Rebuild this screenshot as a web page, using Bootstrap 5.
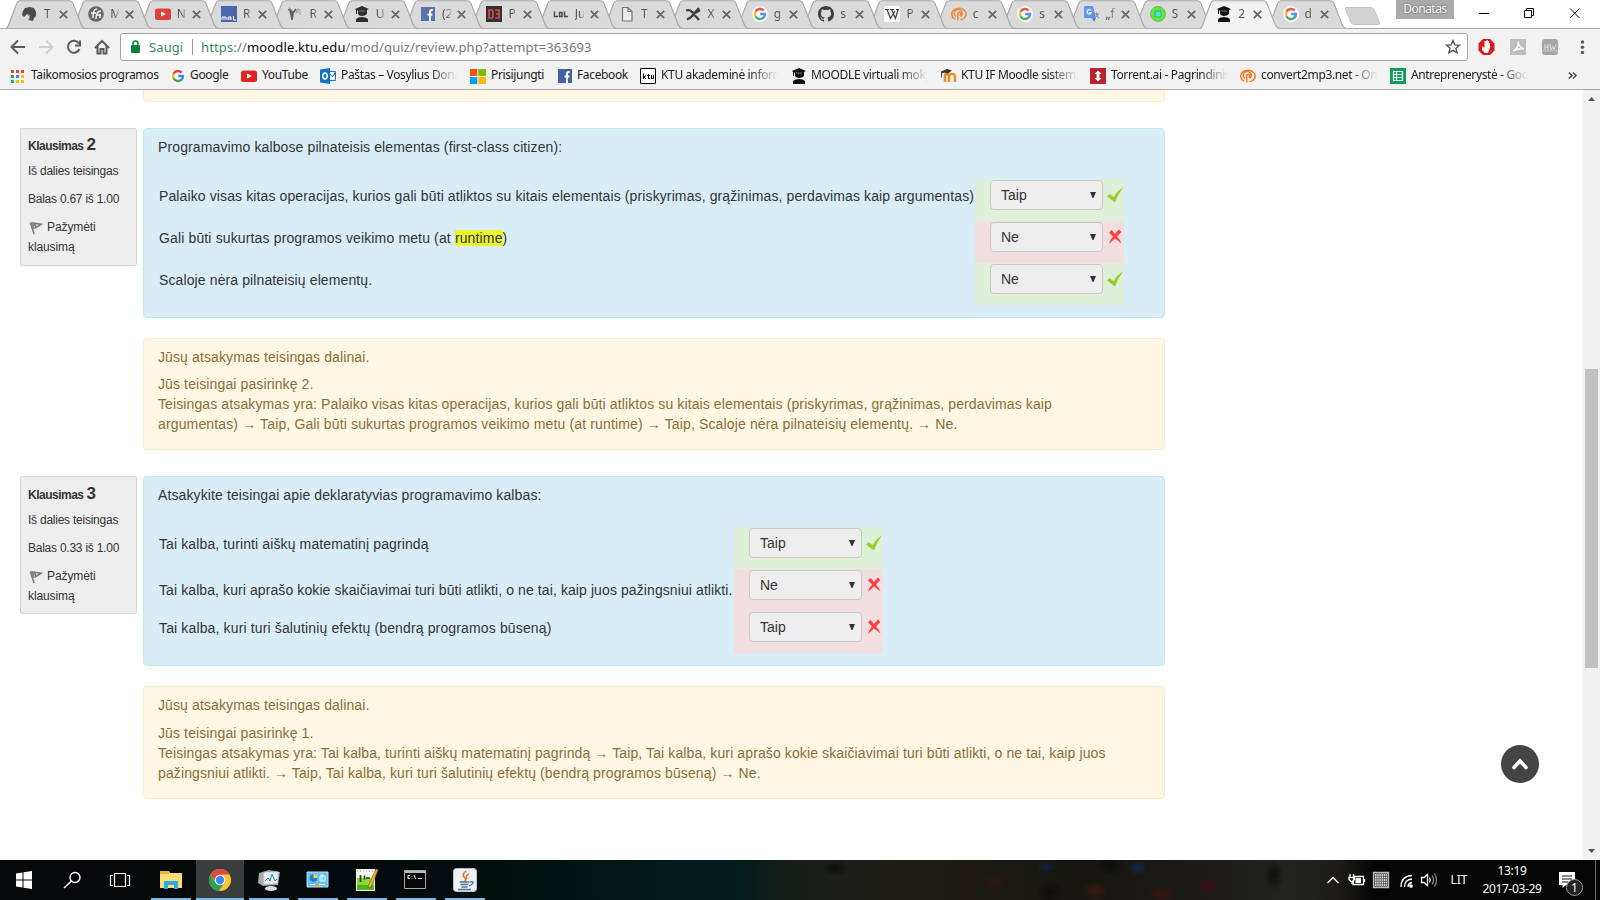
<!DOCTYPE html>
<html lang="lt">
<head>
<meta charset="utf-8">
<title>Testo peržiūra</title>
<link href="https://cdn.jsdelivr.net/npm/bootstrap@5.3.0/dist/css/bootstrap.min.css" rel="stylesheet">
<style>
html,body{height:900px;overflow:hidden}
body{font-family:"Liberation Sans",Arial,sans-serif;font-size:14px;line-height:20px;color:#333;background:#fff}
svg{display:block;flex:none}
.ui{font-family:"Noto Sans","Open Sans",sans-serif;font-size:12px;color:#222;white-space:nowrap}
/* tab strip */
.strip{height:29px;padding-left:6px;border-bottom:1px solid #a9a9a9;background:#fff;z-index:1}
.tb{flex:0 0 66.35px;height:28px;padding-left:16px}
.tb>.shape{position:absolute;left:0;top:0;width:80px;height:29px}
.tb>.fav,.tb>.ttl,.tb>.cls{position:relative}
.tb>.fav{width:16px;height:16px;opacity:.85}
.tb>.ttl{width:9px;margin:0 6px 0 6px;overflow:hidden;color:#555;-webkit-mask-image:linear-gradient(90deg,#000 50%,rgba(0,0,0,.25))}
.tb>.cls{width:9px;height:9px}
.tb.on>.fav{opacity:1}
.newtab{width:35px;height:18px;margin:7px 0 0 12px}
.person{flex:none;width:58px;height:19px;margin-left:16px;background:#aaa;color:#fff;line-height:17px;letter-spacing:-.5px;text-shadow:0 0 2px #444}
.bar{height:34px;background:#f2f2f2;padding-top:4px}
.omni{width:1348px;height:28px;border:1px solid #a5a5a5;border-radius:3px;background:#fff;font-size:13px}
.marks{height:27px;background:#f2f2f2;border-bottom:1px solid #a9a9a9;padding-left:10px;letter-spacing:-.36px}
.bm{height:25px;gap:4px;flex:none;overflow:hidden}
.bm>span{margin-top:-1px}
.bm.fade-r>span{overflow:hidden;-webkit-mask-image:linear-gradient(90deg,#000 calc(100% - 28px),transparent)}
/* page */
.view{height:770px}
.page{width:1583px;padding-left:20px}
.scroller{width:17px;background:#f1f1f1}
.thumb{width:13px;height:299px;background:#c1c1c1;margin-top:262px}
.info{width:117px;height:138px;border:1px solid #d5d5d5;border-radius:2px;background:#eee;padding:6px 7px;font-size:12px;letter-spacing:-.24px;margin-right:6px;flex:none;color:#333}
.info.low{padding-top:7px}
.info b{letter-spacing:-.5px}
.info b span{font-size:17px}
.info .mk{letter-spacing:-.1px}
.qbox{width:1022px;height:190px;border:1px solid #bce8f1;border-radius:4px;background:#d9edf7;padding:8px 14px;letter-spacing:.115px}
.fb{width:1022px;margin-left:123px;border:1px solid #faebcc;border-radius:4px;background:#fef7e3;color:#8a6d3b;padding:8px 14px;white-space:nowrap;letter-spacing:.112px}
.arow{height:42px}
.wide{letter-spacing:.14px}
.slim{letter-spacing:.093px}
.cell{width:149px;padding:1px 0 0 15px;letter-spacing:0}
.good{background:#dff0d8}.bad{background:#f2dede}
.sel{width:113px;height:30px;border:1px solid #c8c8c8;border-radius:4px;background:#eee;padding:0 6px 0 10px}
.qtext{padding-top:7px;white-space:nowrap}
.hl{background:#e9f52f;padding:0}
.totop{position:absolute;left:1501px;top:655px;width:38px;height:38px;background:#444}
/* taskbar */
.task{height:40px;color:#fff;background:radial-gradient(ellipse 10px 7px at 1046px 7px,#0d2340,transparent),radial-gradient(ellipse 10px 7px at 1137px 8px,#102850,transparent),radial-gradient(ellipse 12px 9px at 1208px 26px,#400c14,transparent),radial-gradient(ellipse 14px 10px at 1095px 31px,#3b1a15,transparent),radial-gradient(ellipse 12px 9px at 995px 22px,#301519,transparent),radial-gradient(ellipse 14px 9px at 1162px 34px,#3a1511,transparent),radial-gradient(ellipse 16px 10px at 1110px 6px,#0d0d0d,transparent),radial-gradient(ellipse 14px 12px at 1050px 32px,#0d0d0d,transparent),radial-gradient(ellipse 14px 8px at 835px 8px,#0d0d0c,transparent),radial-gradient(ellipse 10px 16px at 1274px 15px,#0f0e0d,transparent),linear-gradient(90deg,#070809 0,#040b0c 400px,#04110f 520px,#03191a 660px,#031b1a 740px,#131c18 780px,#1d1f18 830px,#1d1b14 960px,#17150f 1080px,#1c1b17 1200px,#24241f 1290px,#1c1b18 1340px,#050506 1375px,#050506 100%)}
.tk{height:40px;flex:none;border-bottom:2px solid transparent}
.tk.run{border-color:#76b9ed}
.tk.act{background:#3a3d3e}
</style>
</head>
<body>
<svg width="0" height="0" class="position-absolute">
<defs>
<symbol id="tab" viewBox="0 0 80 29"><path d="M0 28C2 27 2.500 25 3.500 22.500L10.500 4Q11.500 1 13.500 .7H64Q66 1 67 3.500L75 24Q76.500 28 79.500 28.500Z" fill="#dadada"/><path d="M0 28.500C2 28 2.500 25 3.500 22.500L10.500 4Q11.500 1 13.500 .7H64Q66 1 67 3.500L75 24Q76.500 28 79.500 28.500" fill="none" stroke="#a6a6a6" stroke-width="1.100"/></symbol>
<symbol id="tabon" viewBox="0 0 80 29"><path d="M0 29C2 28 2.500 25 3.500 22.500L10.500 4Q11.500 1 13.500 .7H64Q66 1 67 3.500L75 24Q76.500 28 79.500 29Z" fill="#f2f2f2"/><path d="M0 28.500C2 28 2.500 25 3.500 22.500L10.500 4Q11.500 1 13.500 .7H64Q66 1 67 3.500L75 24Q76.500 28 79.500 28.500" fill="none" stroke="#a6a6a6" stroke-width="1.100"/></symbol>
<symbol id="x" viewBox="0 0 9 9"><path d="M.8.8l7.400 7.400M8.200.8L.8 8.200" stroke="#666" stroke-width="1.700"/></symbol>
<symbol id="horse" viewBox="0 0 16 16"><path d="M1 5L3 2l5-1 4 1 2 4v4l-2 2-1 3-5-1 2-3-3-3-3 3-2-2z" fill="#333"/><path d="M7 14l1-4-2-2" stroke="#888" fill="none"/></symbol>
<symbol id="mono" viewBox="0 0 16 16"><circle cx="8" cy="8" r="7.800" fill="#555"/><path d="M3 7h5M5 12c0-8 2-9 4-9M8 13c0-7 3-8 5-8M8 9h5M12 8v4" stroke="#fff" stroke-width="1.400" fill="none"/></symbol>
<symbol id="yt" viewBox="0 0 16 16"><rect y="2.500" width="16" height="11.500" rx="2.500" fill="#e02424"/><path d="M6 5.500v5l5-2.500z" fill="#fff"/></symbol>
<symbol id="mal" viewBox="0 0 16 16"><path fill="#2e51a2" d="M0 0h16v16H0z"/><path d="M1 14v-3h4v3M3 11v3M7 14v-3h3v3M7 13h3M12.500 10v4H15" stroke="#fff" fill="none"/></symbol>
<symbol id="wolf" viewBox="0 0 16 16"><path d="M1.500 3l4.500 4 3-4M6 7l-1 7M3 4l2 9" stroke="#444" stroke-width="1.700" fill="none"/><path d="M2 1l4 4M10 3l-1 5M11 2v5M13 3v6" stroke="#999"/></symbol>
<symbol id="grad" viewBox="0 0 16 16"><path d="M1 3l7-3 7 3-2 1v4q-2 2-5 2T4 8V4.500H3V8H2V4z" fill="#111"/><path d="M2 16v-3q2-2 6-2t6 2v3z" fill="#111"/><path d="M5 5h6" stroke="#777"/></symbol>
<symbol id="fb" viewBox="0 0 16 16"><path fill="#4460a0" d="M1 1h14v14H1z"/><path d="M12.800 4h-1q-1.800 0-1.800 2V15M7.500 8.500h5" stroke="#fff" stroke-width="2" fill="none"/></symbol>
<symbol id="d3" viewBox="0 0 16 16"><path fill="#151515" d="M0 0h16v16H0z"/><path d="M3 4h3l1 1v6l-1 1H3zM9 4h4v8H9M10 8h3" stroke="#e03030" stroke-width="1.700" fill="none"/></symbol>
<symbol id="lol" viewBox="0 0 16 16"><path d="M1.500 5.500v5H5M6.500 6.500h2.500v4H6.500zM11.500 5.500v5H15" stroke="#333" stroke-width="1.500" fill="none"/></symbol>
<symbol id="doc" viewBox="0 0 16 16"><path d="M3.500 1.500h5.500l4 4v9.500H3.500zM9 1.500v4h4" stroke="#666" fill="#eee" stroke-width="1.200"/></symbol>
<symbol id="xs" viewBox="0 0 16 16"><path d="M1 4.500q4-1 6 1.500t8-2M2 13.500q3-1 5.500-4T14 2M9 9q2 1 5 5" stroke="#222" stroke-width="2.300" fill="none"/></symbol>
<symbol id="goog" viewBox="0 0 16 16"><circle cx="8" cy="8" r="8" fill="#fff"/><g fill="none" stroke-width="2.400"><path d="M11.700 4.600A5 5 0 0 0 3.500 5.800" stroke="#ea4335"/><path d="M3.500 5.700a5 5 0 0 0 0 4.600" stroke="#fbbc05"/><path d="M3.500 10.200a5 5 0 0 0 8 1.400" stroke="#34a853"/><path d="M11.300 11.800A5 5 0 0 0 13 8H8.200" stroke="#4285f4"/></g></symbol>
<symbol id="git" viewBox="0 0 16 16"><path d="M8 0C3.580 0 0 3.580 0 8c0 3.540 2.290 6.530 5.470 7.590.4.070.55-.17.55-.38v-1.490c-2.230.48-2.700-1.070-2.700-1.070-.36-.92-.89-1.170-.89-1.170-.73-.5.050-.48.050-.48.800.050 1.230.82 1.230.82.710 1.210 1.870.870 2.330.660.070-.52.280-.870.500-1.070-1.780-.2-3.640-.89-3.640-3.950 0-.87.310-1.590.82-2.150-.08-.2-.36-1.020.08-2.120 0 0 .67-.21 2.200.82a7.600 7.600 0 0 1 4 0c1.530-1.040 2.200-.82 2.200-.82.440 1.100.160 1.920.080 2.120.510.560.820 1.270.820 2.150 0 3.070-1.870 3.750-3.650 3.950.290.250.540.730.540 1.480v2.200c0 .210.150.460.550.380A8 8 0 0 0 16 8c0-4.420-3.580-8-8-8z" fill="#222"/></symbol>
<symbol id="wiki" viewBox="0 0 16 16"><rect width="16" height="16" rx="2" fill="#fff"/><path d="M1 3.500h4M6 3.500h4M12 3.500h3M3 3.500l3.500 9L11 5M7.500 3.500l4 9 2.500-9" stroke="#222" fill="none" stroke-width="1.200"/></symbol>
<symbol id="conv" viewBox="0 0 16 16"><path d="M4 13A7.200 5.900 0 1 1 9.500 13.800M5 10.500A4 3.800 0 1 1 9.500 10.500M6.800 14.500V7.500q0-1.300 1.500-1.300t1.500 1.300-1.500 1.500" stroke="#f07a22" stroke-width="1.500" fill="none"/></symbol>
<symbol id="trans" viewBox="0 0 16 16"><path fill="#ddd" d="M7 4h9v11H9z"/><path fill="#4a8af4" d="M1 0h8l3 12H1q-1 0-1-1V1z"/><path fill="#3367d6" d="M8 12h4l-2 4z"/><path d="M7 4.500a2.200 2.200 0 1 0 .3 2H5" stroke="#fff" fill="none" stroke-width="1.200"/><path d="M10 8h5M12.500 6.500V8q1 3 2.500 4M14 8q-1 3-3 4" stroke="#777" fill="none"/></symbol>
<symbol id="green" viewBox="0 0 16 16"><circle cx="8" cy="8" r="7.500" fill="#38f50c" stroke="#777" stroke-width=".7"/><path fill="#38d8e8" stroke="#1a9a50" stroke-width=".7" d="M5 5h6v6H5z"/></symbol>
<symbol id="mood" viewBox="0 0 16 16"><path d="M4 14V7.500q0-1.500 1.500-1.500T8 8v6M8 8q0-2 3-2t3 2.500V14" stroke="#f0901e" stroke-width="2.500" fill="none"/><path d="M0 3.500l6-2.500 5 1.500-4 3-4-1-2 1v4H.2z" fill="#333"/></symbol>
<symbol id="tor" viewBox="0 0 16 16"><path fill="#b8242a" d="M0 0h16v16H0z"/><path fill="#fff" d="M8 2.500l3.500 3.500H9.500v4h2L8 13.500 4.500 10h2V6h-2z"/></symbol>
<symbol id="sheet" viewBox="0 0 16 16"><path fill="#0f9d58" d="M0 0h16v16H0z"/><path d="M3.500 3.500h9v9h-9zM3.500 6.500h9M3.500 9.500h9M6.500 3.500v9" stroke="#fff" stroke-width="1.200" fill="none"/></symbol>
<symbol id="apps" viewBox="0 0 14 14"><path fill="#ea4335" d="M1 1h3v3H1zM6 1h3v3H6zM11 1h3v3h-3z"/><path fill="#34a853" d="M1 6h3v3H1zM1 11h3v3H1z"/><path fill="#4285f4" d="M6 6h3v3H6z"/><path fill="#fbbc05" d="M11 6h3v3h-3zM11 11h3v3h-3zM6 11h3v3H6z"/></symbol>
<symbol id="outl" viewBox="0 0 16 16"><path d="M9 3.500h6.500v9H9zM9 5l3.500 4L15.500 4" stroke="#1072c6" fill="#fff"/><path fill="#1072c6" d="M0 1.500L10 0v16L0 14.500z"/><ellipse cx="5" cy="8" rx="2.200" ry="2.900" stroke="#fff" stroke-width="1.600" fill="none"/></symbol>
<symbol id="ms" viewBox="0 0 16 16"><path fill="#f65314" d="M0 1h7.300v7H0z"/><path fill="#7cbb00" d="M8.300 1H16v7H8.300z"/><path fill="#00a1f1" d="M0 9h7.300v7H0z"/><path fill="#ffbb00" d="M8.300 9H16v7H8.300z"/></symbol>
<symbol id="ktu" viewBox="0 0 16 16"><path d="M.5.500h15v15H.5z" fill="#fff" stroke="#000"/><path d="M3.500 5.500v5.500M6 7.500L4 9l2 2M8.500 6v4.500H10M7 7.500h3M11.500 7v3.500h2V7" stroke="#000" fill="none"/></symbol>
<symbol id="ok" viewBox="0 0 16 16"><path d="M0 9.500L2.500 7l4 3Q10 4 16 .5Q11 7 8 15.500Z" fill="#9acd32"/></symbol>
<symbol id="no" viewBox="0 0 16 16"><path d="M2 3.500L4.500 1 8 5 12 .5 14.300 3 10 7.500Q13 10.500 14.500 14.500L8 9.500 1.800 15Q3 11 6 7.500Z" fill="#ff403c"/></symbol>
<symbol id="flag" viewBox="0 0 16 16"><path d="M2.500 3l4 12M3 3l11 1.500-7 4.500M6.500 4l2.500 4" stroke="#777" stroke-width="1.600" fill="none"/><path d="M2 3h4l1 6-2 1z" fill="#888"/></symbol>
</defs>
</svg>

<header class="ui position-relative">
<div class="strip d-flex position-relative">
<div class="tb d-flex align-items-center position-relative" style="z-index:20"><svg class="shape"><use href="#tab"/></svg><svg class="fav"><use href="#horse"/></svg><span class="ttl">T</span><svg class="cls"><use href="#x"/></svg></div>
<div class="tb d-flex align-items-center position-relative" style="z-index:19"><svg class="shape"><use href="#tab"/></svg><svg class="fav"><use href="#mono"/></svg><span class="ttl">M</span><svg class="cls"><use href="#x"/></svg></div>
<div class="tb d-flex align-items-center position-relative" style="z-index:18"><svg class="shape"><use href="#tab"/></svg><svg class="fav"><use href="#yt"/></svg><span class="ttl">N</span><svg class="cls"><use href="#x"/></svg></div>
<div class="tb d-flex align-items-center position-relative" style="z-index:17"><svg class="shape"><use href="#tab"/></svg><svg class="fav"><use href="#mal"/></svg><span class="ttl">R</span><svg class="cls"><use href="#x"/></svg></div>
<div class="tb d-flex align-items-center position-relative" style="z-index:16"><svg class="shape"><use href="#tab"/></svg><svg class="fav"><use href="#wolf"/></svg><span class="ttl">R</span><svg class="cls"><use href="#x"/></svg></div>
<div class="tb d-flex align-items-center position-relative" style="z-index:15"><svg class="shape"><use href="#tab"/></svg><svg class="fav"><use href="#grad"/></svg><span class="ttl">U</span><svg class="cls"><use href="#x"/></svg></div>
<div class="tb d-flex align-items-center position-relative" style="z-index:14"><svg class="shape"><use href="#tab"/></svg><svg class="fav"><use href="#fb"/></svg><span class="ttl">(2</span><svg class="cls"><use href="#x"/></svg></div>
<div class="tb d-flex align-items-center position-relative" style="z-index:13"><svg class="shape"><use href="#tab"/></svg><svg class="fav"><use href="#d3"/></svg><span class="ttl">P</span><svg class="cls"><use href="#x"/></svg></div>
<div class="tb d-flex align-items-center position-relative" style="z-index:12"><svg class="shape"><use href="#tab"/></svg><svg class="fav"><use href="#lol"/></svg><span class="ttl">Ju</span><svg class="cls"><use href="#x"/></svg></div>
<div class="tb d-flex align-items-center position-relative" style="z-index:11"><svg class="shape"><use href="#tab"/></svg><svg class="fav"><use href="#doc"/></svg><span class="ttl">T</span><svg class="cls"><use href="#x"/></svg></div>
<div class="tb d-flex align-items-center position-relative" style="z-index:10"><svg class="shape"><use href="#tab"/></svg><svg class="fav"><use href="#xs"/></svg><span class="ttl">X</span><svg class="cls"><use href="#x"/></svg></div>
<div class="tb d-flex align-items-center position-relative" style="z-index:9"><svg class="shape"><use href="#tab"/></svg><svg class="fav"><use href="#goog"/></svg><span class="ttl">g</span><svg class="cls"><use href="#x"/></svg></div>
<div class="tb d-flex align-items-center position-relative" style="z-index:8"><svg class="shape"><use href="#tab"/></svg><svg class="fav"><use href="#git"/></svg><span class="ttl">s</span><svg class="cls"><use href="#x"/></svg></div>
<div class="tb d-flex align-items-center position-relative" style="z-index:7"><svg class="shape"><use href="#tab"/></svg><svg class="fav"><use href="#wiki"/></svg><span class="ttl">P</span><svg class="cls"><use href="#x"/></svg></div>
<div class="tb d-flex align-items-center position-relative" style="z-index:6"><svg class="shape"><use href="#tab"/></svg><svg class="fav"><use href="#conv"/></svg><span class="ttl">c</span><svg class="cls"><use href="#x"/></svg></div>
<div class="tb d-flex align-items-center position-relative" style="z-index:5"><svg class="shape"><use href="#tab"/></svg><svg class="fav"><use href="#goog"/></svg><span class="ttl">s</span><svg class="cls"><use href="#x"/></svg></div>
<div class="tb d-flex align-items-center position-relative" style="z-index:4"><svg class="shape"><use href="#tab"/></svg><svg class="fav"><use href="#trans"/></svg><span class="ttl">„f</span><svg class="cls"><use href="#x"/></svg></div>
<div class="tb d-flex align-items-center position-relative" style="z-index:3"><svg class="shape"><use href="#tab"/></svg><svg class="fav"><use href="#green"/></svg><span class="ttl">S</span><svg class="cls"><use href="#x"/></svg></div>
<div class="tb on d-flex align-items-center position-relative" style="z-index:21"><svg class="shape"><use href="#tabon"/></svg><svg class="fav"><use href="#grad"/></svg><span class="ttl">2</span><svg class="cls"><use href="#x"/></svg></div>
<div class="tb d-flex align-items-center position-relative" style="z-index:1"><svg class="shape"><use href="#tab"/></svg><svg class="fav"><use href="#goog"/></svg><span class="ttl">d</span><svg class="cls"><use href="#x"/></svg></div>
<svg class="newtab" viewBox="0 0 35 18"><path d="M1 .5h25q2 0 3 2l5.500 13q.5 2-1.500 2H9q-2 0-3-2L.5 2.500Q0 .5 1 .5z" fill="#d2d2d2" stroke="#c2c2c2"/></svg>
<div class="person text-center">Donatas</div>
<svg width="146" height="28" viewBox="1454 0 146 28" fill="none" stroke="#000"><path d="M1479 13.500h10M1524.500 10.500h7v7h-7zM1526.500 10V8.500h7v7H1532M1570 8.500l9.500 9.500M1579.500 8.500L1570 18"/></svg>
</div>
<div class="bar d-flex">
<svg width="120" height="28" viewBox="0 0 120 28" fill="none" stroke="#5a5a5a" stroke-width="2"><path d="M25 14H12M18 7.500L11.500 14l6.500 6.500"/><path d="M39 14h13M46 7.500l6.500 6.500-6.500 6.500" stroke="#cfcfcf"/><path d="M79 10.500A6 6 0 1 0 79.500 16M80 7.500v5h-5"/><path d="M95 15l7-7 7 7M97.500 13v7.500h3V16h3v4.500h3V13"/></svg>
<div class="omni d-flex align-items-center">
<svg class="ms-2 me-1" width="14" height="16" viewBox="0 0 14 16"><rect x="2" y="6" width="9" height="8" rx="1" fill="#0b8043"/><path d="M4 7V4.500a2.500 2.500 0 0 1 5 0V7" fill="none" stroke="#0b8043" stroke-width="1.500"/></svg>
<span style="width:45px;flex:none;padding-left:2px;color:#3c8a5a;letter-spacing:.1px">Saugi</span><i style="width:1px;height:16px;background:#999;margin-right:8px"></i>
<span style="width:1218px;color:#777;letter-spacing:.145px"><span style="color:#3c8a5a">https:</span>//<span class="text-black">moodle.ktu.edu</span>/mod/quiz/review.php?attempt=363693</span>
<svg width="16" height="16" viewBox="0 0 16 16" style="margin-left:26px"><path d="M8 1.500l1.800 4.400 4.700.3-3.600 3 1.200 4.600L8 11.300l-4.100 2.500 1.200-4.600-3.600-3 4.700-.3z" fill="none" stroke="#555" stroke-width="1.400"/></svg>
</div>
<svg width="132" height="28" viewBox="0 0 132 28"><path d="M15 6h7l4.500 4.500v7L22 22h-7l-4.500-4.500v-7z" fill="#e3151b"/><path d="M14 13v4l3 3h3l2-5V10h-1v3-5h-1.200v5-6h-1.200v6-5H16.500v7z" fill="#fff"/><path d="M42 6h16v16H42z" fill="#bdbdbd"/><path d="M45 18q6-3 5-9 1 5 6 7-5-1-11 2z" stroke="#fff" stroke-width="1.400" fill="none"/><rect x="74" y="6" width="16" height="16" rx="3" fill="#a5a5a5"/><path d="M77 11v6M77 14h3M80 11v6M82 11l1 6 2-4 1 4 2-6" stroke="#ddd" fill="none"/><path d="M74 18h16" stroke="#ccc"/><g fill="#555"><circle cx="114.500" cy="9" r="1.700"/><circle cx="114.500" cy="14.200" r="1.700"/><circle cx="114.500" cy="19.400" r="1.700"/></g></svg>
</div>
<div class="marks d-flex">
<div class="bm d-flex align-items-center" style="width:160px;gap:7px"><svg width="14" height="14"><use href="#apps"/></svg><span>Taikomosios programos</span></div>
<div class="bm d-flex align-items-center" style="width:71px"><svg width="16" height="16"><use href="#goog"/></svg><span>Google</span></div>
<div class="bm d-flex align-items-center" style="width:79px;gap:5px"><svg width="16" height="16"><use href="#yt"/></svg><span>YouTube</span></div>
<div class="bm fade-r d-flex align-items-center" style="width:138px;margin-right:12px;gap:5px"><svg width="16" height="16"><use href="#outl"/></svg><span>Paštas – Vosylius Donatas</span></div>
<div class="bm d-flex align-items-center" style="width:87px;gap:5px"><svg width="16" height="16"><use href="#ms"/></svg><span>Prisijungti</span></div>
<div class="bm d-flex align-items-center" style="width:83px"><svg width="16" height="16"><use href="#fb"/></svg><span>Facebook</span></div>
<div class="bm fade-r d-flex align-items-center" style="width:138px;margin-right:13px;gap:5px"><svg width="16" height="16"><use href="#ktu"/></svg><span>KTU akademinė informacinė</span></div>
<div class="bm fade-r d-flex align-items-center" style="width:137px;margin-right:13px"><svg width="16" height="16"><use href="#grad"/></svg><span>MOODLE virtuali mokymosi</span></div>
<div class="bm fade-r d-flex align-items-center" style="width:137px;margin-right:12px"><svg width="16" height="16"><use href="#mood"/></svg><span>KTU IF Moodle sistema - K</span></div>
<div class="bm fade-r d-flex align-items-center" style="width:138px;margin-right:12px;gap:5px"><svg width="16" height="16"><use href="#tor"/></svg><span>Torrent.ai - Pagrindinis psl</span></div>
<div class="bm fade-r d-flex align-items-center" style="width:138px;margin-right:12px;gap:5px"><svg width="16" height="16"><use href="#conv"/></svg><span>convert2mp3.net - Online</span></div>
<div class="bm fade-r d-flex align-items-center" style="width:138px;margin-right:40px;gap:5px"><svg width="16" height="16"><use href="#sheet"/></svg><span>Antreprenerystė - Google</span></div>
<svg width="9" height="26" viewBox="0 0 9 26"><path d="M.8 9.500L4 12.500.8 15.500M4.800 9.500L8 12.500 4.800 15.500" fill="none" stroke="#444" stroke-width="1.500"/></svg>
</div>
</header>

<main class="view d-flex position-relative overflow-hidden">
<div class="page">
<div class="fb" style="height:26px;margin-top:-14px;margin-bottom:26px"></div>
<section class="d-flex">
<aside class="info"><div><b>Klausimas <span>2</span></b></div><div style="margin-top:5px">Iš dalies teisingas</div><div class="mt-2">Balas 0.67 iš 1.00</div><div class="mk mt-2"><svg class="d-inline-block" width="15" height="15"><use href="#flag"/></svg><span class="ms-1">Pažymėti</span><br>klausimą</div></aside>
<div class="qbox"><div>Programavimo kalbose pilnateisis elementas (first-class citizen):</div>
<div style="margin:22px 0 0 1px">
<div class="arow d-flex"><div class="qtext" style="width:816px">Palaiko visas kitas operacijas, kurios gali būti atliktos su kitais elementais (priskyrimas, grąžinimas, perdavimas kaip argumentas)</div><div class="cell good d-flex"><div class="sel d-flex align-items-center justify-content-between"><span>Taip</span><svg width="6" height="6"><path d="M0 0h6L3.500 6h-1z" fill="#333"/></svg></div><svg class="ms-1" width="16" height="30"><use href="#ok"/></svg></div></div>
<div class="arow d-flex"><div class="qtext wide" style="width:816px">Gali būti sukurtas programos veikimo metu (at <span class="hl">runtime</span>)</div><div class="cell bad d-flex"><div class="sel d-flex align-items-center justify-content-between"><span>Ne</span><svg width="6" height="6"><path d="M0 0h6L3.500 6h-1z" fill="#333"/></svg></div><svg class="ms-1" width="16" height="30"><use href="#no"/></svg></div></div>
<div class="arow d-flex"><div class="qtext" style="width:816px">Scaloje nėra pilnateisių elementų.</div><div class="cell good d-flex"><div class="sel d-flex align-items-center justify-content-between"><span>Ne</span><svg width="6" height="6"><path d="M0 0h6L3.500 6h-1z" fill="#333"/></svg></div><svg class="ms-1" width="16" height="30"><use href="#ok"/></svg></div></div>
</div></div>
</section>
<div class="fb" style="height:112px;margin-top:20px;margin-bottom:26px"><div style="margin-bottom:7px">Jūsų atsakymas teisingas dalinai.</div>Jūs teisingai pasirinkę 2.<br>Teisingas atsakymas yra: Palaiko visas kitas operacijas, kurios gali būti atliktos su kitais elementais (priskyrimas, grąžinimas, perdavimas kaip<br><span class="wide">argumentas) → Taip, Gali būti sukurtas programos veikimo metu (at runtime) → Taip, Scaloje nėra pilnateisių elementų. → Ne.</span></div>
<section class="d-flex">
<aside class="info low"><div><b>Klausimas <span>3</span></b></div><div style="margin-top:5px">Iš dalies teisingas</div><div class="mt-2">Balas 0.33 iš 1.00</div><div class="mk mt-2"><svg class="d-inline-block" width="15" height="15"><use href="#flag"/></svg><span class="ms-1">Pažymėti</span><br>klausimą</div></aside>
<div class="qbox"><div>Atsakykite teisingai apie deklaratyvias programavimo kalbas:</div>
<div style="margin:22px 0 0 1px">
<div class="arow d-flex"><div class="qtext" style="width:575px">Tai kalba, turinti aiškų matematinį pagrindą</div><div class="cell good d-flex"><div class="sel d-flex align-items-center justify-content-between"><span>Taip</span><svg width="6" height="6"><path d="M0 0h6L3.500 6h-1z" fill="#333"/></svg></div><svg class="ms-1" width="16" height="30"><use href="#ok"/></svg></div></div>
<div class="arow d-flex"><div class="qtext slim" style="width:575px;padding-top:11px">Tai kalba, kuri aprašo kokie skaičiavimai turi būti atlikti, o ne tai, kaip juos pažingsniui atlikti.</div><div class="cell bad d-flex"><div class="sel d-flex align-items-center justify-content-between"><span>Ne</span><svg width="6" height="6"><path d="M0 0h6L3.500 6h-1z" fill="#333"/></svg></div><svg class="ms-1" width="16" height="30"><use href="#no"/></svg></div></div>
<div class="arow d-flex"><div class="qtext wide" style="width:575px">Tai kalba, kuri turi šalutinių efektų (bendrą programos būseną)</div><div class="cell bad d-flex"><div class="sel d-flex align-items-center justify-content-between"><span>Taip</span><svg width="6" height="6"><path d="M0 0h6L3.500 6h-1z" fill="#333"/></svg></div><svg class="ms-1" width="16" height="30"><use href="#no"/></svg></div></div>
</div></div>
</section>
<div class="fb" style="height:113px;margin-top:20px"><div style="margin-bottom:8px">Jūsų atsakymas teisingas dalinai.</div>Jūs teisingai pasirinkę 1.<br>Teisingas atsakymas yra: Tai kalba, turinti aiškų matematinį pagrindą → Taip, Tai kalba, kuri aprašo kokie skaičiavimai turi būti atlikti, o ne tai, kaip juos<br>pažingsniui atlikti. → Taip, Tai kalba, kuri turi šalutinių efektų (bendrą programos būseną) → Ne.</div>
</div>
<div class="totop rounded-circle"><svg width="38" height="38"><path d="M13 22.500l6-6.500 6 6.500" fill="none" stroke="#fff" stroke-width="3.600" stroke-linecap="round"/></svg></div>
<div class="scroller d-flex flex-column align-items-center">
<svg width="17" height="17"><path d="M5 11h7L8.500 7z" fill="#505050"/></svg>
<div class="thumb"></div>
<svg class="mt-auto" width="17" height="17"><path d="M5 6h7l-3.500 4z" fill="#505050"/></svg>
</div>
</main>

<footer class="task ui d-flex">
<svg class="tk" width="48" height="40"><path d="M16 13.500l6.500-1v7H16zM23.500 12.300l8.500-1.200v8.400h-8.500zM16 20.500h6.500v7l-6.500-1zM23.500 20.500H32V29l-8.500-1.200z" fill="#fff"/></svg>
<svg class="tk" width="48" height="40"><circle cx="27" cy="17.500" r="5" fill="none" stroke="#fff" stroke-width="1.400"/><path d="M23.500 21L16 28" stroke="#fff" stroke-width="1.600"/></svg>
<svg class="tk" width="55" height="40"><path d="M18.500 13.500h11v13h-11zM17 15.500h-2.500v10H17M31 15.500h2.500v10H31" fill="none" stroke="#fff" stroke-width="1.200"/></svg>
<div class="tk run" style="width:40px"><svg width="40" height="38"><path d="M9 11h9l1 2h12v15H9z" fill="#fbdd7c"/><path d="M9 11h9v3H9z" fill="#f2b51d"/><path d="M13 29v-8h14v8h-4v-4h-6v4z" fill="#2fa9e6"/></svg></div>
<div class="tk run act" style="width:48px;margin-left:5px"><svg width="48" height="38"><circle cx="24" cy="20" r="11" fill="#fbc52d"/><path d="M24 20h-6L14.500 14.500A11 11 0 0 1 33.500 14.500H24z" fill="#dd4b3e"/><path d="M14.400 14.500A11 11 0 0 0 23 31l5.500-8.500L24 25l-5-3z" fill="#29a25a"/><circle cx="24" cy="20" r="5.200" fill="#fff"/><circle cx="24" cy="20" r="4.200" fill="#4285f4"/></svg></div>
<div class="tk run" style="width:40px;margin-left:5px"><svg width="40" height="38"><path d="M10 13l10-3 11 2-2 13-15 1-5-3z" fill="#aaa"/><path d="M15 13l14-1-1 11-13 1z" fill="#e2f1fa" stroke="#ddd"/><path d="M16 21l3-3 2 3 2-7 3 7 2-2" stroke="#287fb0" fill="none"/><ellipse cx="22" cy="28.500" rx="6" ry="2.500" fill="#ddd"/></svg></div>
<div class="tk run" style="width:40px;margin-left:9px"><svg width="40" height="38"><path d="M9 12h21v15H9z" fill="#67c0f1" stroke="#b7e3ff"/><circle cx="15.500" cy="18" r="3.800" fill="#167fcf"/><path d="M15.500 18v-4a4 4 0 0 1 4 4z" fill="#ffd348"/><path d="M22 16h5v5h-5zM24 14v7M12 24.500h15" stroke="#eaffff" fill="none"/><path d="M17 24.500h4" stroke="#f90" stroke-width="2"/></svg></div>
<div class="tk run" style="width:40px;margin-left:9px"><svg width="40" height="38"><path d="M9 9h19v22H9z" fill="#f6f8ef"/><path d="M10 18h17v12H10z" fill="#90d82f"/><path d="M10 25h17v5H10z" fill="#50b51d"/><path d="M10 11h17" stroke="#999" stroke-dasharray="1 2"/><path d="M13.500 15v7M17.500 15.500v4M19 18h4" stroke="#234022" stroke-width="1.700"/><path d="M29 9l2 1-7 17-3 1 1-4z" fill="#e9b72d" stroke="#945a25" stroke-width=".7"/></svg></div>
<div class="tk run" style="width:40px;margin-left:9px"><svg width="40" height="38"><path d="M8.500 10.500h21v18h-21z" fill="#080808" stroke="#aaa"/><path d="M9 12h20" stroke="#bbb" stroke-width="2"/><path d="M14 15.500h-2v3h2M16 16v.5M16 18v.5M18 15l1.500 4M22 18.500h4" stroke="#fff" fill="none"/></svg></div>
<div class="tk run" style="width:40px;margin-left:9px"><svg width="40" height="38"><rect x="8.500" y="8.500" width="23" height="23" rx="3" fill="#eef1f3" stroke="#b8c8d2"/><path d="M21 11q-5 4-1 7 2 2-1 4M24 14q-4 2-2 5" stroke="#e7752b" stroke-width="1.600" fill="none"/><path d="M14.500 22h10M15.500 24.500h8M16.500 27h6M13 29.500h13M25 22q4-1 3 1t-4 3" stroke="#4a7a95" stroke-width="1.300" fill="none"/></svg></div>
<div class="ms-auto d-flex">
<svg width="119" height="40" viewBox="1321 0 119 40" fill="none" stroke="#fff" stroke-width="1.300"><path d="M1327.500 23l5.500-5.500 5.500 5.500"/><path d="M1354 16.500h9.500v8H1353zM1364.500 19v3"/><path d="M1355.500 18h5.500v5h-5.500z" fill="#fff" stroke="none"/><path d="M1350 14v3M1353.500 14v3M1349 17.500h5.500v2l-2 2h-1.500l-2-2zM1352 21v3"/><path d="M1373.500 12.500h15v15h-15z" fill="#555" stroke="#bbb"/><path d="M1375 15h12M1375 17.500h12M1375 20h12M1375 22.500h12M1375 25h12" stroke-dasharray="1.500 .7" stroke="#eee"/><path d="M1401 27q0-11 11-11.500M1404.500 27q0-7.500 7.500-8M1408 27q0-4 4-4.500"/><circle cx="1411" cy="26" r="1.200" fill="#fff"/><path d="M1421.500 17.500h2.500l3.500-3v11l-3.500-3h-2.500zM1429.500 17.500q1.500 2.500 0 5"/><path d="M1432 15.500q3 4.500 0 9M1434.500 13.500q4 6.500 0 13" stroke="#888"/></svg>
<span class="text-center" style="width:38px;line-height:40px">LIT</span>
<div class="text-center" style="width:68px;line-height:18px;padding-top:2px;letter-spacing:-.36px">13:19<br>2017-03-29</div>
<svg width="54" height="40" viewBox="1546 0 54 40"><path d="M1559 12h16v13h-9l-3.500 3v-3h-3.500z" fill="#fff"/><path d="M1562 16h10M1562 19h10M1562 22h6" stroke="#111"/><circle cx="1574.500" cy="27.500" r="8" fill="#222" stroke="#999"/><text x="1574.500" y="32" font-size="12" text-anchor="middle" fill="#fff">1</text><path d="M1595.500 0v40" stroke="#666"/></svg>
</div>
</footer>
<script src="https://cdn.jsdelivr.net/npm/bootstrap@5.3.0/dist/js/bootstrap.bundle.min.js"></script>
</body>
</html>
